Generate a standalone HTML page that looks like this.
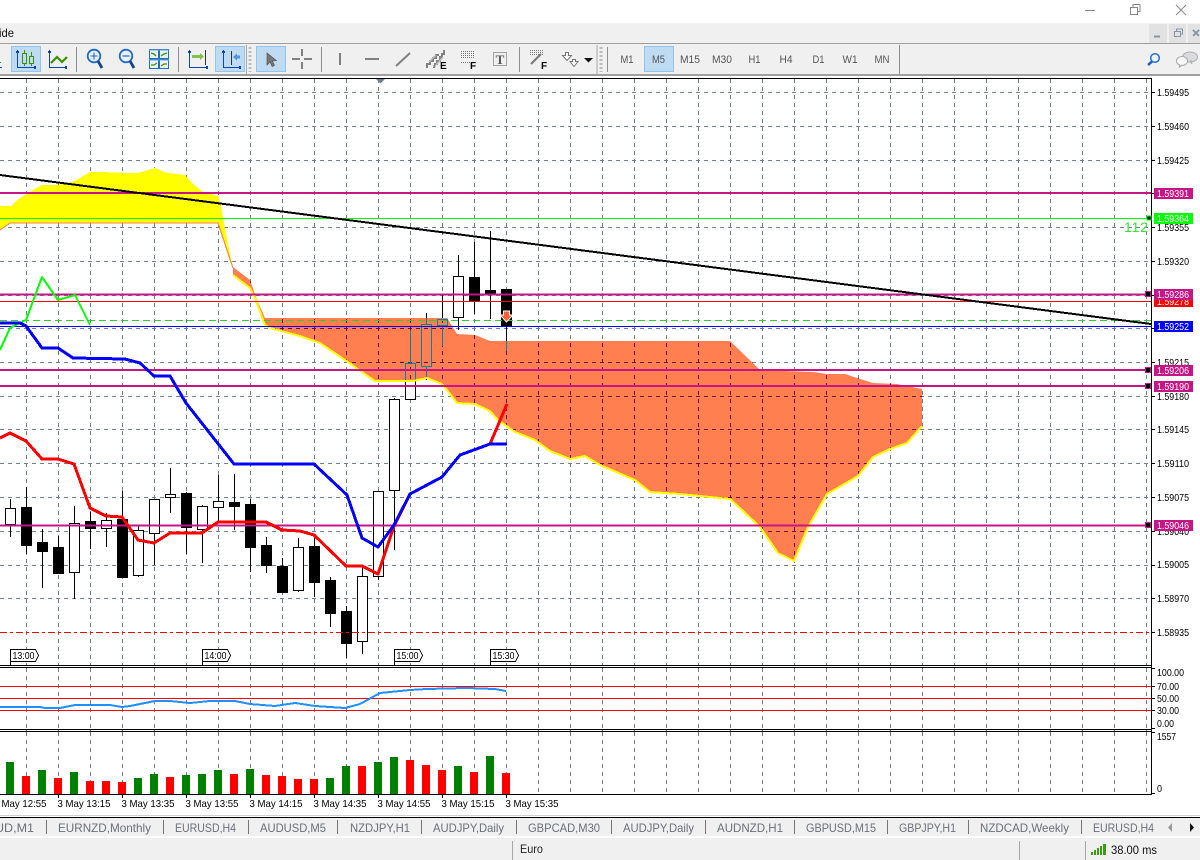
<!DOCTYPE html>
<html><head><meta charset="utf-8"><style>
html,body{margin:0;padding:0;background:#fff;width:1200px;height:860px;overflow:hidden}
svg{position:absolute;left:0;top:0;font-family:"Liberation Sans",sans-serif}
.s{shape-rendering:crispEdges}
.ax{font-size:10.5px;fill:#000}
.tm{font-size:10.5px;fill:#000}
.lb{font-size:10.5px;fill:#fff}
.tb{font-size:11px;fill:#555;text-anchor:middle}
.tab{font-size:12px;fill:#68707c}
.bf{font-size:10px;font-weight:bold;fill:#000}
</style></head><body>
<svg width="1200" height="860" viewBox="0 0 1200 860" xmlns="http://www.w3.org/2000/svg">
<defs>
<path id="gv" d="M26.5 79V794m32-715v715m32-715v715m32-715v715m32-715v715m32-715v715m32-715v715m32-715v715m32-715v715m32-715v715m32-715v715m32-715v715m32-715v715m32-715v715m32-715v715m32-715v715m32-715v715m32-715v715m32-715v715m32-715v715m32-715v715m32-715v715m32-715v715m32-715v715m32-715v715m32-715v715m32-715v715m32-715v715m32-715v715m32-715v715m32-715v715m32-715v715m32-715v715m32-715v715m32-715v715m32-715v715"/>
<path id="gh" d="M0 92.5H1151M0 126.5H1151M0 160.5H1151M0 193.5H1151M0 227.5H1151M0 261.5H1151M0 295.5H1151M0 328.5H1151M0 362.5H1151M0 396.5H1151M0 429.5H1151M0 463.5H1151M0 497.5H1151M0 531.5H1151M0 565.5H1151M0 598.5H1151"/>
<clipPath id="cl"><polygon points="233,267 250,280 257,300 265,318 447,318 457,334 475,335 490,341 730,341 760,370 813,372 827,374 845,374 857,378 873,383 897,384 912,387 922,389 922,426 907,443 890,449 873,457 858,476 827,494 808,527 794,561 778,553 760,527 740,508 730,499 720,498 680,494 650,492 635,480 600,465 585,456 570,459 550,451 535,440 515,432 498,420 490,411 475,404 457,403 447,390 442,384 427,378 413,381 375,381 345,360 320,343 300,336 270,328 265,325 255,298 250,288 233,275"/></clipPath>
</defs>

<!-- window chrome -->
<rect x="0" y="23" width="1200" height="52" fill="#f0f0f0"/>
<rect x="0" y="43" width="1200" height="1" fill="#a0a0a0"/>
<rect x="0" y="74" width="1200" height="2" fill="#a0a0a0"/>
<g class="s">
<rect x="1149" y="24" width="18" height="19" fill="#e2e2e2"/><rect x="1169" y="24" width="17" height="19" fill="#e2e2e2"/><rect x="1188" y="24" width="12" height="19" fill="#e2e2e2"/>
<path d="M1154 36.5h6" stroke="#8795a6" stroke-width="2" fill="none"/>
<path d="M1174.5 31.5h6v5h-6zM1176.5 31v-2h6v5h-2" stroke="#8795a6" fill="none"/>
<path d="M1193 30l6 6m0-6l-6 6" stroke="#8795a6" stroke-width="2" fill="none"/>
<path d="M1085 10.5h10" stroke="#888"/>
<path d="M1130.5 7.5h7v7h-7zM1133 7V4.5h7v7h-2.500" stroke="#888" fill="none"/>
</g>
<path d="M1176 5l10 10m0-10l-10 10" stroke="#888" fill="none"/>
<text x="-1" y="37" font-size="12" fill="#111" textLength="15" lengthAdjust="spacingAndGlyphs">ide</text>

<!-- toolbar -->
<g class="s">
<rect x="11.500" y="46.500" width="29" height="25" fill="#bfdbf2" stroke="#91c4ef"/>
<rect x="215.500" y="46.500" width="29" height="25" fill="#bfdbf2" stroke="#91c4ef"/>
<rect x="256.500" y="46.500" width="29" height="25" fill="#bfdbf2" stroke="#91c4ef"/>
<rect x="644.500" y="46.500" width="29" height="25" fill="#bfdbf2" stroke="#91c4ef"/>
<path d="M76.500 47v25M178.500 47v25M321.500 47v25M519.500 47v25M607.500 47v25M899.500 45v29" stroke="#8f8f8f" fill="none"/>
<path d="M246.500 45v29M597 45v29" stroke="#a8a8a8" fill="none"/>
<path d="M250 47v25M601 47v25" stroke="#bbb" stroke-width="3" stroke-dasharray="2 2" fill="none"/>
<path d="M17.500 50v17.500H35M49.500 50v17.500H66M189.500 50v17.500H207M223.500 50v17.500H240M-2 67.500H2" stroke="#0f45b0" fill="none"/>
<path d="M16 51h3v2h-3zM34 66h2v3h-2zM48 51h3v2h-3zM65 66h2v3h-2zM188 51h3v2h-3zM206 66h2v3h-2zM222 51h3v2h-3zM239 66h2v3h-2z" fill="#0f45b0"/>
<path d="M24.500 50v16M31.500 52v14" stroke="#3a9100" fill="none"/>
<rect x="22.500" y="53.500" width="4" height="10" fill="#bfdbf2" stroke="#3a9100"/>
<rect x="29.500" y="56.500" width="4" height="7" fill="#bfdbf2" stroke="#3a9100"/>
<path d="M0 62.500h1" stroke="#3a9100"/>
</g>
<path d="M51 63l6-6 5 5 5-5" stroke="#3a9100" stroke-width="2.200" fill="none"/>
<circle cx="94" cy="56" r="6.300" fill="#e8f1fb" stroke="#2068c4" stroke-width="1.800"/>
<path d="M98 61l4 7" stroke="#16488f" stroke-width="2.800"/>
<path d="M90.500 56h7M94 52.500v7" stroke="#2068c4" stroke-width="1.100"/>
<circle cx="126" cy="56" r="6.300" fill="#e8f1fb" stroke="#2068c4" stroke-width="1.800"/>
<path d="M130 61l4 7" stroke="#16488f" stroke-width="2.800"/>
<path d="M122.500 56h7" stroke="#2068c4" stroke-width="1.200"/>
<g class="s">
<rect x="149.500" y="49.500" width="19" height="19" fill="#eaf2fb" stroke="#1f6fc0"/>
<path d="M159 49v20M149 59h20" stroke="#1f6fc0" stroke-width="2" fill="none"/>
<path d="M149 50h20M149 60h20" stroke="#6aa2dc" fill="none"/>
</g>
<path d="M151 53l3 1 2 2M161 56l3-2 3-1M151 65l3 0 3-2M161 66l3-2 3 0" stroke="#3a9100" stroke-width="1.300" fill="none"/>
<path d="M192 55h8v-2l4 3.500-4 3.500v-2h-8z" fill="#7fc34a"/>
<path class="s" d="M205.500 50v15" stroke="#333" fill="none"/>
<path class="s" d="M231.500 51v14" stroke="#333" fill="none"/>
<path d="M240 55.500h-3v-2l-4 3.500 4 3.500v-2h3z" fill="#4a96e0"/>
<path d="M267 53l0 12 3-3 2.200 4.500 2.300-1.100-2.200-4.400 4-.5z" fill="#777" stroke="#555" stroke-width=".7"/>
<g class="s" stroke="#808080" fill="none" stroke-width="2">
<path d="M292 59h8M304 59h8M302 49v7M302 62v7"/>
<path d="M340 53v12"/>
<path d="M365 59h14"/>
</g>
<path d="M396 66l14-13" stroke="#808080" stroke-width="2"/>
<!-- channels -->
<g class="s" fill="none" stroke="#808080" stroke-width="2">
<path d="M427 68v-4h3v-3h3v-3h3v-3h3"/>
<path d="M434 68l1-4h2v-3h3v-4h2v-3h2v-4"/>
</g>
<path d="M429 62l7-7M436 65l7-8" stroke="#bdbdbd" stroke-width="1.500" fill="none"/>
<text x="440" y="69" class="bf">E</text>
<path class="s" d="M461 51.500h13M461 53.500h13M461 55.500h13M461 57.500h13M461 62.500h9" stroke="#777" stroke-dasharray="1 1" fill="none"/>
<text x="470" y="69" class="bf">F</text>
<rect class="s" x="493.500" y="52.500" width="13" height="13" fill="none" stroke="#555" stroke-dasharray="1 1"/>
<text x="500" y="64" font-size="13" font-weight="bold" font-family="Liberation Serif" text-anchor="middle" fill="#555">T</text>
<path class="s" d="M530 50.500h13M530 52.500h13M530 54.500h13" stroke="#777" stroke-dasharray="1 1" fill="none"/>
<path d="M531 64l10-10" stroke="#777" stroke-width="2"/>
<text x="541" y="69" class="bf">F</text>
<!-- arrows -->
<path d="M565.500 52.500h3v3h3l-4.500 5-4.500-5h3zM572.500 59.500h3v2h2.500l-4 5-4-5h2.500z" fill="#fff" stroke="#777"/>
<path d="M584 58h9l-4.500 4.500z" fill="#111"/>
<text x="627" y="63" class="tb" textLength="13" lengthAdjust="spacingAndGlyphs">M1</text><text x="658.500" y="63" class="tb" textLength="13" lengthAdjust="spacingAndGlyphs">M5</text><text x="690" y="63" class="tb" textLength="20" lengthAdjust="spacingAndGlyphs">M15</text><text x="722" y="63" class="tb" textLength="20" lengthAdjust="spacingAndGlyphs">M30</text><text x="754.500" y="63" class="tb" textLength="12" lengthAdjust="spacingAndGlyphs">H1</text><text x="786" y="63" class="tb" textLength="13" lengthAdjust="spacingAndGlyphs">H4</text><text x="818.500" y="63" class="tb" textLength="12" lengthAdjust="spacingAndGlyphs">D1</text><text x="850" y="63" class="tb" textLength="15" lengthAdjust="spacingAndGlyphs">W1</text><text x="882" y="63" class="tb" textLength="15" lengthAdjust="spacingAndGlyphs">MN</text>
<circle cx="1155" cy="58" r="4.300" fill="#eef5fc" stroke="#2a6fd0" stroke-width="1.500"/>
<path d="M1152 61.500l-4 3.500" stroke="#1f5fc0" stroke-width="2.500"/>
<ellipse cx="1190" cy="57" rx="7.500" ry="5" fill="#d9dbde" stroke="#b0b0b0"/>
<path d="M1190 61l2 3-1-4" fill="#d9dbde" stroke="#b0b0b0"/>
<ellipse cx="1182" cy="61" rx="5.500" ry="4.500" fill="#f7f7f7" stroke="#a8a8a8"/>
<path d="M1180 65l-1 2.500 3-2.500" fill="#f7f7f7" stroke="#a8a8a8"/>

<!-- chart -->
<g class="s" fill="none">
<use href="#gv" stroke="#708090" stroke-dasharray="4 4"/>
<use href="#gh" stroke="#708090" stroke-dasharray="4 4"/>
</g>
<polygon points="0,206 11,206 17,200 25,195 33,190 42,185 58,185 75,181 90,172 100,172 130,173 138,173 155,168 167,173 185,175 192,183 203,192 218,196 221,206 227,240 233,268 230,262 218,223 10,223 0,230" fill="#ffff00" class="s"/>
<path class="s" d="M0 230L10 223H218L233 268" stroke="#ff7f50" fill="none"/>

<!-- candles -->
<g class="s" stroke="#000" fill="none">
<path d="M10.500 499V537M26.500 487V554M42.500 529V588M58.500 536V573M74.500 506V599M90.500 512V549M106.500 513V547M122.500 491V577M138.500 526V577M154.500 499V565M170.500 468V513M186.500 492V554M202.500 505V563M218.500 475V523M234.500 474V530M250.500 499V572M266.500 537V573M282.500 558V592M298.500 538V592M314.500 537V597M330.500 577V627M346.500 606V658M362.500 565V654M378.500 491V580M394.500 398V550M410.500 330V399M426.500 313V380M442.500 295V346M458.500 255V330M474.500 242V314M490.500 231V319M506.500 289V351"/>
<g fill="#fff">
<rect x="5.500" y="508.500" width="10" height="16"/><rect x="69.500" y="523.500" width="10" height="49"/><rect x="101.500" y="520.500" width="10" height="8"/><rect x="133.500" y="530.500" width="10" height="45"/><rect x="149.500" y="499.500" width="10" height="34"/><rect x="165.500" y="494.500" width="10" height="3"/><rect x="197.500" y="506.500" width="10" height="23"/><rect x="213.500" y="501.500" width="10" height="6"/><rect x="293.500" y="547.500" width="10" height="43"/><rect x="357.500" y="576.500" width="10" height="65"/><rect x="373.500" y="491.500" width="10" height="85"/><rect x="389.500" y="399.500" width="10" height="91"/><rect x="405.500" y="363.500" width="10" height="36"/><rect x="421.500" y="324.500" width="10" height="42"/><rect x="437.500" y="319.500" width="10" height="6"/><rect x="453.500" y="276.500" width="10" height="41"/>
</g>
<g fill="#000">
<rect x="21.500" y="507.500" width="10" height="38"/><rect x="37.500" y="542.500" width="10" height="9"/><rect x="53.500" y="547.500" width="10" height="26"/><rect x="85.500" y="521.500" width="10" height="7"/><rect x="117.500" y="519.500" width="10" height="58"/><rect x="181.500" y="493.500" width="10" height="34"/><rect x="229.500" y="502.500" width="10" height="4"/><rect x="245.500" y="504.500" width="10" height="43"/><rect x="261.500" y="545.500" width="10" height="20"/><rect x="277.500" y="566.500" width="10" height="26"/><rect x="309.500" y="546.500" width="10" height="36"/><rect x="325.500" y="580.500" width="10" height="33"/><rect x="341.500" y="611.500" width="10" height="32"/><rect x="469.500" y="277.500" width="10" height="24"/><rect x="485.500" y="290.500" width="10" height="3"/><rect x="501.500" y="289.500" width="10" height="37"/>
</g>
</g>

<!-- cloud over candles -->
<g clip-path="url(#cl)">
<rect x="230" y="260" width="700" height="310" fill="#ff7f50" class="s"/>
<g class="s" fill="none">
<use href="#gv" stroke="#6a0a3d" stroke-dasharray="4 4"/>
<use href="#gh" stroke="#6a0a3d" stroke-dasharray="4 4"/>
<path d="M410.500 330V363M426.500 313V324M426.500 366V380M442.500 325V346M506.500 341V351" stroke="#0a7fa8"/>
<rect x="405.500" y="363.500" width="10" height="36" stroke="#0a7fa8"/><rect x="421.500" y="324.500" width="10" height="42" stroke="#0a7fa8"/><rect x="437.500" y="319.500" width="10" height="6" stroke="#0a7fa8"/>
</g>
</g>
<polyline class="s" points="233,275 250,288 255,298 265,325 270,328 300,336 320,343 345,360 375,381 413,381 427,378 442,384 447,390 457,403 475,404 490,411 498,420 515,432 535,440 550,451 570,459 585,456 600,465 635,480 650,492 680,494 720,498 730,499 740,508 760,527 778,553 794,561 808,527 827,494 858,476 873,457 890,449 907,443 922,426" fill="none" stroke="#ffff00" stroke-width="2"/>

<!-- horizontal lines -->
<g class="s" fill="none">
<path d="M0 218.500H1151" stroke="#00ff00"/>
<path d="M0 301.500H1151" stroke="#ff0000"/>
<path d="M0 320.500H1151" stroke="#32cd32" stroke-dasharray="7 4"/>
<path d="M0 326.500H1151" stroke="#0000ff"/>
<path d="M0 632.500H1151" stroke="#ff0000" stroke-dasharray="7 3 3 3"/>
<path d="M0 193H1151M0 294.500H1151M0 370H1151M0 386H1151M0 525.500H1151" stroke="#c71585" stroke-width="2"/>
</g>
<!-- indicator lines -->
<g class="s" fill="none" stroke-linejoin="round">
<polyline points="0,350 10,328 26,320 42,277 58,300 75,295 90,325" stroke="#00ff00" stroke-width="2"/>
<polyline points="0,438 10,433 26,441 42,459 58,459 74,464 90,508 106,516 122,517 138,540 154,543 170,533 202,533 218,522 266,522 282,530 300,531 314,535 346,566 362,566 378,574 394,526 410,494 442,477 460,455 490,444 507,404" stroke="#ff0000" stroke-width="3"/>
<polyline points="0,323 20,323 26,326 42,348 58,348 73,358 125,359 140,363 154,376 170,376 186,403 234,464 314,464 347,495 362,538 378,547 394,525 410,494 442,477 460,455 490,444 507,444" stroke="#0000ff" stroke-width="3"/>
<polyline points="0,175 1151,324" stroke="#000" stroke-width="2"/>
</g>
<path d="M506.500 311h-3v4h-3.500l6.500 7 6.500-7h-3.500v-4z" fill="#ff6030" stroke="#fff"/>
<text x="1124" y="232" font-size="14" fill="#32e632" textLength="24" lengthAdjust="spacing">112</text>

<!-- time flags -->
<g class="s" fill="#fff" stroke="#000">
<path d="M10.500 665V649.500H35.500L38.500 655.500L35.500 661.500H10.500" />
<path d="M202.500 665V649.500H227.500L230.500 655.500L227.500 661.500H202.500"/>
<path d="M394.500 665V649.500H419.500L422.500 655.500L419.500 661.500H394.500"/>
<path d="M490.500 665V649.500H515.500L518.500 655.500L515.500 661.500H490.500"/>
</g>
<g class="ax">
<text x="12.500" y="659" textLength="22" lengthAdjust="spacingAndGlyphs">13:00</text><text x="204.500" y="659" textLength="22" lengthAdjust="spacingAndGlyphs">14:00</text><text x="396.500" y="659" textLength="22" lengthAdjust="spacingAndGlyphs">15:00</text><text x="492.500" y="659" textLength="22" lengthAdjust="spacingAndGlyphs">15:30</text>
</g>

<!-- subwindows -->
<g class="s" fill="none">
<rect x="0" y="666" width="1151" height="63" fill="#fff" stroke="none"/>
<rect x="0" y="731" width="1151" height="63" fill="#fff" stroke="none"/>
<path d="M26.500 668V729m32-61v61m32-61v61m32-61v61m32-61v61m32-61v61m32-61v61m32-61v61m32-61v61m32-61v61m32-61v61m32-61v61m32-61v61m32-61v61m32-61v61m32-61v61m32-61v61m32-61v61m32-61v61m32-61v61m32-61v61m32-61v61m32-61v61m32-61v61m32-61v61m32-61v61m32-61v61m32-61v61m32-61v61m32-61v61m32-61v61m32-61v61m32-61v61m32-61v61m32-61v61m32-61v61" stroke="#708090" stroke-dasharray="4 4"/>
<path d="M26.500 732V794m32-62v62m32-62v62m32-62v62m32-62v62m32-62v62m32-62v62m32-62v62m32-62v62m32-62v62m32-62v62m32-62v62m32-62v62m32-62v62m32-62v62m32-62v62m32-62v62m32-62v62m32-62v62m32-62v62m32-62v62m32-62v62m32-62v62m32-62v62m32-62v62m32-62v62m32-62v62m32-62v62m32-62v62m32-62v62m32-62v62m32-62v62m32-62v62m32-62v62m32-62v62m32-62v62" stroke="#708090" stroke-dasharray="4 4"/>
<path d="M0 686.500H1151M0 698.500H1151M0 710.500H1151" stroke="#ff0000"/>
<polyline points="0,707 40,707 45,708 60,708 75,705 110,705 122,707 130,706 155,701 170,701 190,703 210,701 235,701 250,704 275,706 295,703 315,706 345,708 360,704 380,693 400,691 410,690 427,689 466,688 495,689 506,691" stroke="#1e90ff" stroke-width="2"/>
</g>
<g class="s" fill="#008000">
<rect x="6" y="762" width="8" height="32"/><rect x="38" y="770" width="8" height="24"/><rect x="70" y="772" width="8" height="22"/><rect x="134" y="778" width="8" height="16"/><rect x="150" y="774" width="8" height="20"/><rect x="182" y="775" width="8" height="19"/><rect x="198" y="774" width="8" height="20"/><rect x="214" y="770" width="8" height="24"/><rect x="246" y="769" width="8" height="25"/><rect x="326" y="778" width="8" height="16"/><rect x="342" y="766" width="8" height="28"/><rect x="374" y="762" width="8" height="32"/><rect x="390" y="757" width="8" height="37"/><rect x="454" y="766" width="8" height="28"/><rect x="486" y="756" width="8" height="38"/>
</g>
<g class="s" fill="#ff0000">
<rect x="22" y="776" width="8" height="18"/><rect x="54" y="778" width="8" height="16"/><rect x="86" y="781" width="8" height="13"/><rect x="102" y="781" width="8" height="13"/><rect x="118" y="782" width="8" height="12"/><rect x="166" y="777" width="8" height="17"/><rect x="230" y="774" width="8" height="20"/><rect x="262" y="775" width="8" height="19"/><rect x="278" y="776" width="8" height="18"/><rect x="294" y="779" width="8" height="15"/><rect x="310" y="779" width="8" height="15"/><rect x="358" y="766" width="8" height="28"/><rect x="406" y="760" width="8" height="34"/><rect x="422" y="765" width="8" height="29"/><rect x="438" y="770" width="8" height="24"/><rect x="470" y="772" width="8" height="22"/><rect x="502" y="773" width="8" height="21"/>
</g>

<!-- borders -->
<g class="s" stroke="#000" fill="none">
<path d="M0 78.500H1151.500V794.500H0"/>
<path d="M0 665.500H1151M0 667.500H1151M0 729.500H1151M0 731.500H1151"/>
<path d="M1151 92.500h4M1151 126.500h4M1151 160.500h4M1151 193.500h4M1151 227.500h4M1151 261.500h4M1151 295.500h4M1151 328.500h4M1151 362.500h4M1151 396.500h4M1151 429.500h4M1151 463.500h4M1151 497.500h4M1151 531.500h4M1151 565.500h4M1151 598.500h4M1151 632.500h4"/>
<path d="M1151 668.500h4M1151 686.500h4M1151 698.500h4M1151 710.500h4M1151 728.500h4M1151 732.500h4M1151 793.500h4"/>
<path d="M58.500 794v4M122.500 794v4M186.500 794v4M250.500 794v4M314.500 794v4M378.500 794v4M442.500 794v4M506.500 794v4"/>
</g>
<path d="M376 79h9l-4.500 4.500z" fill="#708090"/>

<!-- right axis text -->
<g class="ax" lengthAdjust="spacingAndGlyphs">
<text x="1157" y="96" textLength="32" lengthAdjust="spacingAndGlyphs">1.59495</text><text x="1157" y="130" textLength="32" lengthAdjust="spacingAndGlyphs">1.59460</text><text x="1157" y="164" textLength="32" lengthAdjust="spacingAndGlyphs">1.59425</text><text x="1157" y="231" textLength="32" lengthAdjust="spacingAndGlyphs">1.59355</text><text x="1157" y="265" textLength="32" lengthAdjust="spacingAndGlyphs">1.59320</text><text x="1157" y="366" textLength="32" lengthAdjust="spacingAndGlyphs">1.59215</text><text x="1157" y="400" textLength="32" lengthAdjust="spacingAndGlyphs">1.59180</text><text x="1157" y="433" textLength="32" lengthAdjust="spacingAndGlyphs">1.59145</text><text x="1157" y="467" textLength="32" lengthAdjust="spacingAndGlyphs">1.59110</text><text x="1157" y="501" textLength="32" lengthAdjust="spacingAndGlyphs">1.59075</text><text x="1157" y="535" textLength="32" lengthAdjust="spacingAndGlyphs">1.59040</text><text x="1157" y="568" textLength="32" lengthAdjust="spacingAndGlyphs">1.59005</text><text x="1157" y="602" textLength="32" lengthAdjust="spacingAndGlyphs">1.58970</text><text x="1157" y="636" textLength="32" lengthAdjust="spacingAndGlyphs">1.58935</text>
<text x="1157" y="676" textLength="27" lengthAdjust="spacingAndGlyphs">100.00</text><text x="1157" y="690" textLength="22" lengthAdjust="spacingAndGlyphs">70.00</text><text x="1157" y="702" textLength="22" lengthAdjust="spacingAndGlyphs">50.00</text><text x="1157" y="714" textLength="22" lengthAdjust="spacingAndGlyphs">30.00</text><text x="1157" y="727" textLength="17" lengthAdjust="spacingAndGlyphs">0.00</text><text x="1157" y="740" textLength="19" lengthAdjust="spacingAndGlyphs">1557</text><text x="1157" y="792" textLength="5" lengthAdjust="spacingAndGlyphs">0</text>
</g>
<!-- price labels -->
<g class="s">
<rect x="1154" y="296" width="39" height="11" fill="#ff0000"/>
<rect x="1154" y="188" width="39" height="11" fill="#c71585"/>
<rect x="1154" y="213" width="39" height="11" fill="#00ff00"/>
<rect x="1154" y="289" width="39" height="11" fill="#c71585"/>
<rect x="1154" y="321" width="39" height="11" fill="#0000ff"/>
<rect x="1154" y="365" width="39" height="11" fill="#c71585"/>
<rect x="1154" y="381" width="39" height="11" fill="#c71585"/>
<rect x="1154" y="520" width="39" height="11" fill="#c71585"/>
</g>
<g class="lb">
<text x="1157" y="305" textLength="32" lengthAdjust="spacingAndGlyphs">1.59278</text>
<text x="1157" y="197" textLength="32" lengthAdjust="spacingAndGlyphs">1.59391</text>
<text x="1157" y="222" textLength="32" lengthAdjust="spacingAndGlyphs">1.59364</text>
</g>
<rect class="s" x="1154" y="289" width="39" height="11" fill="#c71585"/>
<g class="lb">
<text x="1157" y="298" textLength="32" lengthAdjust="spacingAndGlyphs">1.59286</text>
<text x="1157" y="330" textLength="32" lengthAdjust="spacingAndGlyphs">1.59252</text>
<text x="1157" y="374" textLength="32" lengthAdjust="spacingAndGlyphs">1.59206</text>
<text x="1157" y="390" textLength="32" lengthAdjust="spacingAndGlyphs">1.59190</text>
<text x="1157" y="529" textLength="32" lengthAdjust="spacingAndGlyphs">1.59046</text>
</g>
<g class="s">
<rect x="1147" y="216" width="4" height="4" fill="#000" stroke="#00ff00"/>
<rect x="1145.500" y="291.500" width="5" height="5" fill="#000" stroke="#c71585"/>
<rect x="1145.500" y="367.500" width="5" height="5" fill="#000" stroke="#c71585"/>
<rect x="1145.500" y="383.500" width="5" height="5" fill="#000" stroke="#c71585"/>
<rect x="1145.500" y="522.500" width="5" height="5" fill="#000" stroke="#c71585"/>
</g>

<!-- time axis -->
<g class="tm">
<text x="-6.500" y="807" textLength="53" lengthAdjust="spacingAndGlyphs">3 May 12:55</text><text x="57.500" y="807" textLength="53" lengthAdjust="spacingAndGlyphs">3 May 13:15</text><text x="121.500" y="807" textLength="53" lengthAdjust="spacingAndGlyphs">3 May 13:35</text><text x="185.500" y="807" textLength="53" lengthAdjust="spacingAndGlyphs">3 May 13:55</text><text x="249.500" y="807" textLength="53" lengthAdjust="spacingAndGlyphs">3 May 14:15</text><text x="313.500" y="807" textLength="53" lengthAdjust="spacingAndGlyphs">3 May 14:35</text><text x="377.500" y="807" textLength="53" lengthAdjust="spacingAndGlyphs">3 May 14:55</text><text x="441.500" y="807" textLength="53" lengthAdjust="spacingAndGlyphs">3 May 15:15</text><text x="505.500" y="807" textLength="53" lengthAdjust="spacingAndGlyphs">3 May 15:35</text>
</g>

<!-- tabs -->
<rect x="0" y="815" width="1200" height="1" fill="#d0d0d0"/>
<rect x="0" y="817" width="1200" height="1" fill="#000"/>
<rect x="0" y="818" width="1200" height="18" fill="#f0f0f0"/>
<rect x="0" y="838" width="1200" height="22" fill="#f0f0f0"/>
<g class="tab">
<text x="-5" y="832" textLength="39" lengthAdjust="spacingAndGlyphs">UD,M1</text><text x="58" y="832" textLength="93" lengthAdjust="spacingAndGlyphs">EURNZD,Monthly</text><text x="175" y="832" textLength="61" lengthAdjust="spacingAndGlyphs">EURUSD,H4</text><text x="260" y="832" textLength="66" lengthAdjust="spacingAndGlyphs">AUDUSD,M5</text><text x="350" y="832" textLength="60" lengthAdjust="spacingAndGlyphs">NZDJPY,H1</text><text x="433" y="832" textLength="71" lengthAdjust="spacingAndGlyphs">AUDJPY,Daily</text><text x="528" y="832" textLength="72" lengthAdjust="spacingAndGlyphs">GBPCAD,M30</text><text x="623" y="832" textLength="71" lengthAdjust="spacingAndGlyphs">AUDJPY,Daily</text><text x="717" y="832" textLength="66" lengthAdjust="spacingAndGlyphs">AUDNZD,H1</text><text x="806" y="832" textLength="70" lengthAdjust="spacingAndGlyphs">GBPUSD,M15</text><text x="899" y="832" textLength="57" lengthAdjust="spacingAndGlyphs">GBPJPY,H1</text><text x="980" y="832" textLength="89" lengthAdjust="spacingAndGlyphs">NZDCAD,Weekly</text><text x="1093" y="832" textLength="61" lengthAdjust="spacingAndGlyphs">EURUSD,H4</text>
</g>
<path class="s" d="M46.500 820v14M163.500 820v14M248.500 820v14M337.500 820v14M421.500 820v14M516.500 820v14M611.500 820v14M705.500 820v14M794.500 820v14M887.500 820v14M968.500 820v14M1081.500 820v14" stroke="#777" fill="none"/>
<path d="M1172 823v9l-4-4.500z" fill="#999"/><path d="M1190 823v9l4-4.500z" fill="#111"/>

<!-- status bar -->
<path class="s" d="M512.500 841v19M1019.500 841v19M1085.500 841v19" stroke="#a8a8a8" fill="none"/>
<text x="520" y="853" font-size="12" fill="#222" textLength="23" lengthAdjust="spacingAndGlyphs">Euro</text>
<g class="s" fill="#3c9c14">
<rect x="1091" y="852" width="2" height="3"/><rect x="1094" y="850" width="2" height="5"/><rect x="1097" y="848" width="2" height="7"/><rect x="1100" y="846" width="2" height="9"/><rect x="1103" y="844" width="3" height="11"/>
</g>
<text x="1111" y="854" font-size="12" fill="#111" textLength="46" lengthAdjust="spacingAndGlyphs">38.00 ms</text>
</svg>
</body></html>
